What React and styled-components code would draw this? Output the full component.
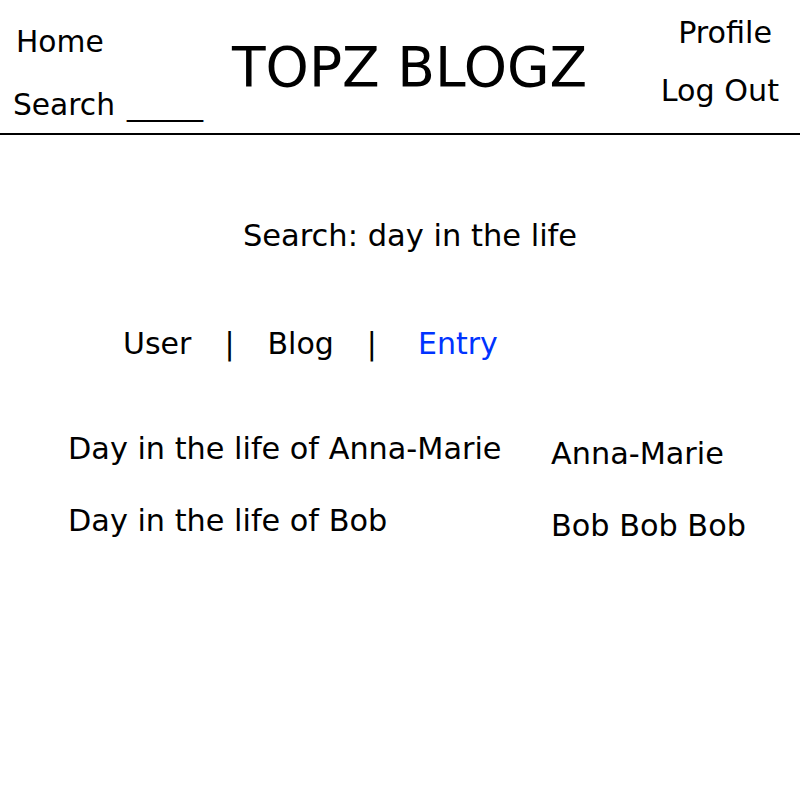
import React from "react";
import styled, { createGlobalStyle } from "styled-components";

const Global = createGlobalStyle`
  html, body { margin: 0; padding: 0; background: #fff; }
  body { font-family: "DejaVu Sans", Verdana, sans-serif; color: #000; }
`;

const Page = styled.div`
  width: 800px;
  min-height: 800px;
  background: #fff;
`;

const Header = styled.header`
  display: grid;
  grid-template-columns: 232px auto 1fr;
  height: 133px;
  border-bottom: 2px solid #000;
`;

const LeftNav = styled.nav`
  display: flex;
  flex-direction: column;
  padding: 10px 0 0 13px;
  font-size: 29.7px;
  line-height: 63px;
`;

const NavItem = styled.span`
  margin-left: ${(p) => p.$indent || 0}px;
  margin-right: ${(p) => p.$outdent || 0}px;
  white-space: nowrap;
`;

const Blank = styled.span`
  display: inline-block;
  margin-left: 3px;
  transform: scaleX(1.28);
  transform-origin: left center;
`;

const Title = styled.h1`
  margin: 40px 0 0;
  font-size: 55px;
  font-weight: normal;
  line-height: 55px;
  white-space: nowrap;
`;

const RightNav = styled.nav`
  display: flex;
  flex-direction: column;
  align-items: flex-end;
  padding: 4px 21px 0 0;
  font-size: 30.2px;
  line-height: 58px;
`;

const Main = styled.main`
  display: flex;
  flex-direction: column;
`;

const SearchLine = styled.h2`
  margin: 83px 0 0;
  padding-left: 20px;
  text-align: center;
  font-size: 30.5px;
  font-weight: normal;
  line-height: 35px;
`;

const Tabs = styled.div`
  display: flex;
  align-items: baseline;
  gap: 33px;
  margin-top: 73px;
  padding-left: 123px;
  font-size: 30px;
  line-height: 35px;
`;

const Tab = styled.span`
  color: ${(p) => (p.$active ? "#0033ff" : "#000")};
  margin-left: ${(p) => p.$shift || 0}px;
`;

const Sep = styled.span``;

const Results = styled.div`
  display: grid;
  grid-template-columns: 483px 1fr;
  margin-top: 52px;
  padding-left: 68px;
  font-size: 30.3px;
  line-height: 72px;
`;

const EntryTitle = styled.div`
  white-space: nowrap;
`;

const Author = styled.div`
  padding-top: 10px;
  line-height: 62px;
  white-space: nowrap;
`;

const results = [
  { title: "Day in the life of Anna-Marie", author: "Anna-Marie" },
  { title: "Day in the life of Bob", author: "Bob Bob Bob" },
];

export default function App() {
  return (
    <Page>
      <Global />
      <Header>
        <LeftNav>
          <NavItem $indent={3}>Home</NavItem>
          <NavItem>
            Search <Blank>____</Blank>
          </NavItem>
        </LeftNav>
        <Title>TOPZ BLOGZ</Title>
        <RightNav>
          <NavItem $outdent={7}>Profile</NavItem>
          <NavItem>Log Out</NavItem>
        </RightNav>
      </Header>
      <Main>
        <SearchLine>Search: day in the life</SearchLine>
        <Tabs>
          <Tab>User</Tab>
          <Sep>|</Sep>
          <Tab>Blog</Tab>
          <Sep>|</Sep>
          <Tab $active $shift={8}>Entry</Tab>
        </Tabs>
        <Results>
          {results.map((r) => (
            <React.Fragment key={r.title}>
              <EntryTitle>{r.title}</EntryTitle>
              <Author>{r.author}</Author>
            </React.Fragment>
          ))}
        </Results>
      </Main>
    </Page>
  );
}
